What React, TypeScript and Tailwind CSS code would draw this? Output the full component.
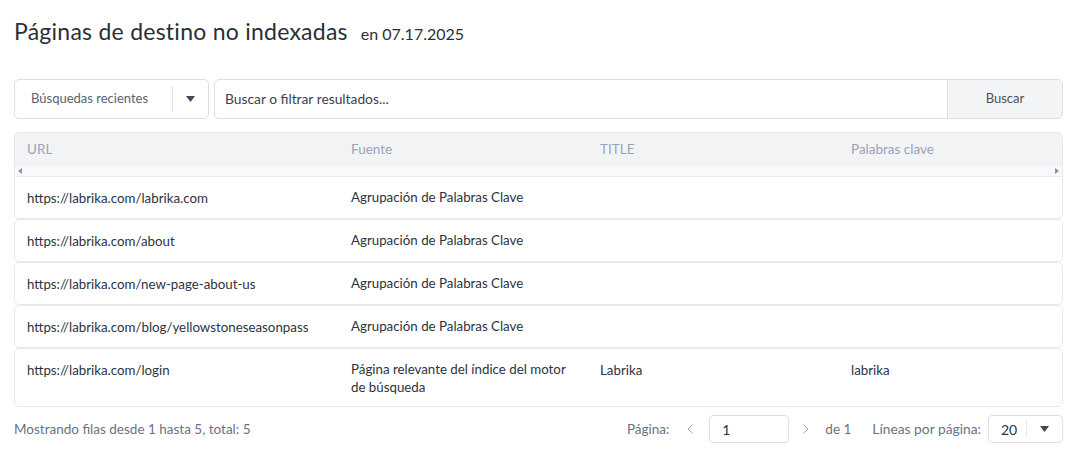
import { ChevronLeft, ChevronRight } from "lucide-react";

type Row = {
  url: string;
  source: string;
  title?: string;
  keywords?: string;
};

const rows: Row[] = [
  { url: "https://labrika.com/labrika.com", source: "Agrupación de Palabras Clave" },
  { url: "https://labrika.com/about", source: "Agrupación de Palabras Clave" },
  { url: "https://labrika.com/new-page-about-us", source: "Agrupación de Palabras Clave" },
  { url: "https://labrika.com/blog/yellowstoneseasonpass", source: "Agrupación de Palabras Clave" },
  {
    url: "https://labrika.com/login",
    source: "Página relevante del índice del motor de búsqueda",
    title: "Labrika",
    keywords: "labrika",
  },
];

const Caret = () => (
  <svg width="9" height="6" viewBox="0 0 9 6" className="fill-[#3d4a5c]">
    <path d="M0 0h9L4.5 6z" />
  </svg>
);

const cols = "grid grid-cols-[324px_249px_251px_1fr]";

export default function App() {
  return (
    <div className="w-[1074px] h-[462px] bg-white pl-[14px] pr-[11px] pt-[14px] font-['Lato',sans-serif] text-[13px] text-[#2c3340]">
      <div className="flex items-baseline gap-[13px] h-[28px]">
        <h1 className="text-[23px] text-[#2b2f36] tracking-[0.25px]">Páginas de destino no indexadas</h1>
        <span className="text-[16px] text-[#2b2f36]">en 07.17.2025</span>
      </div>

      {/* search bar */}
      <div className="flex gap-[5px] mt-[37px] h-[40px]">
        <div className="w-[195px] flex items-center border border-[#dcdfe6] rounded-[5px]">
          <span className="flex-1 pl-[16px] text-[13px] text-[#5a6270]">Búsquedas recientes</span>
          <span className="w-px h-[26px] bg-[#dcdfe6]" />
          <span className="w-[35px] flex justify-center">
            <Caret />
          </span>
        </div>
        <div className="flex-1 flex border border-[#dcdfe6] rounded-[5px] overflow-hidden">
          <input
            className="flex-1 pl-[10px] text-[13.8px] text-[#3a4150] outline-none placeholder:text-[#3a4150]"
            placeholder="Buscar o filtrar resultados..."
          />
          <button className="w-[115px] bg-[#f3f4f6] border-l border-[#dcdfe6] text-[13px] text-[#4a5260]">
            Buscar
          </button>
        </div>
      </div>

      {/* table */}
      <div className="mt-[13px]">
        <div className="border border-[#e6e9ef] rounded-[5px] overflow-hidden">
          <div className={`${cols} h-[33px] items-center bg-[#f2f3f5] text-[13.5px] text-[#9aa4b8] pl-[12px]`}>
            <span>URL</span>
            <span>Fuente</span>
            <span>TITLE</span>
            <span>Palabras clave</span>
          </div>
          <div className="h-[11px] bg-[#f8f9fa] border-b border-[#e6e9ef] flex items-center justify-between px-[3px]">
            <svg width="4" height="6" viewBox="0 0 4 6" className="fill-[#8f949c]">
              <path d="M4 0v6L0 3z" />
            </svg>
            <svg width="4" height="6" viewBox="0 0 4 6" className="fill-[#8f949c]">
              <path d="M0 0v6l4-3z" />
            </svg>
          </div>
          <RowView row={rows[0]} />
        </div>
        {rows.slice(1).map((row) => (
          <div key={row.url} className="border border-[#e6e9ef] rounded-[5px]">
            <RowView row={row} />
          </div>
        ))}
      </div>

      {/* footer */}
      <div className="flex items-center mt-[8px] h-[28px]">
        <span className="text-[13.5px] text-[#6b7280]">Mostrando filas desde 1 hasta 5, total: 5</span>
        <div className="ml-auto flex items-center text-[13.5px] text-[#6b7280]">
          <span>Página:</span>
          <ChevronLeft size={16} strokeWidth={1.5} className="ml-[13px] text-[#9ca3af]" />
          <div className="ml-[11px] w-[80px] h-[28px] border border-[#dcdfe6] rounded-[4px] flex items-center pl-[12px] text-[14px] text-[#2c3340]">
            1
          </div>
          <ChevronRight size={16} strokeWidth={1.5} className="ml-[9px] text-[#9ca3af]" />
          <span className="ml-[11px]">de 1</span>
          <span className="ml-[21px] text-[13.8px]">Líneas por página:</span>
          <div className="ml-[7px] w-[75px] h-[28px] border border-[#dcdfe6] rounded-[4px] flex items-center text-[14px] text-[#2c3340]">
            <span className="pl-[12px] w-[37px]">20</span>
            <span className="w-px h-[18px] bg-[#e6e9ef]" />
            <span className="flex-1 flex justify-center">
              <Caret />
            </span>
          </div>
        </div>
      </div>
    </div>
  );
}

function RowView({ row }: { row: Row }) {
  const tall = row.source.length > 30;
  return (
    <div className={`${cols} pl-[12px] items-start text-[13.3px] ${tall ? "pt-[12px] h-[57px]" : "pt-[12px] h-[41px]"}`}>
      <span>{row.url}</span>
      <span className="w-[230px] leading-[18px] -mt-[1px]">{row.source}</span>
      <span>{row.title}</span>
      <span>{row.keywords}</span>
    </div>
  );
}
